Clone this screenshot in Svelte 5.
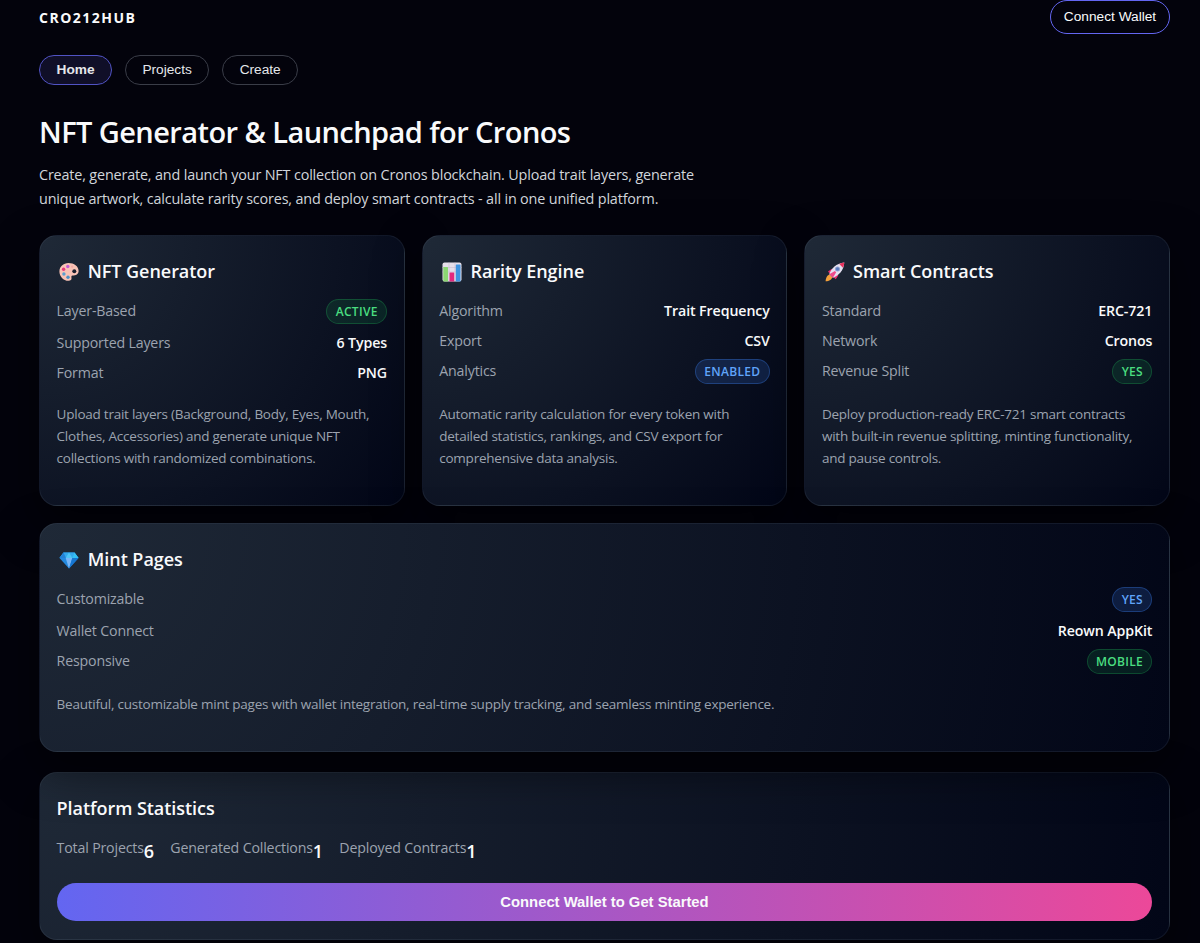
<script lang="ts">
    type Tone = "green" | "blue";

    interface Row {
        label: string;
        value: string;
        tone?: Tone;
    }

    interface Feature {
        icon: "palette" | "chart" | "rocket" | "gem";
        title: string;
        rows: Row[];
        text: string;
        wide?: boolean;
    }

    const tabs = ["Home", "Projects", "Create"];
    let active = $state("Home");

    const features: Feature[] = [
        {
            icon: "palette",
            title: "NFT Generator",
            rows: [
                { label: "Layer-Based", value: "Active", tone: "green" },
                { label: "Supported Layers", value: "6 Types" },
                { label: "Format", value: "PNG" },
            ],
            text: "Upload trait layers (Background, Body, Eyes, Mouth, Clothes, Accessories) and generate unique NFT collections with randomized combinations.",
        },
        {
            icon: "chart",
            title: "Rarity Engine",
            rows: [
                { label: "Algorithm", value: "Trait Frequency" },
                { label: "Export", value: "CSV" },
                { label: "Analytics", value: "Enabled", tone: "blue" },
            ],
            text: "Automatic rarity calculation for every token with detailed statistics, rankings, and CSV export for comprehensive data analysis.",
        },
        {
            icon: "rocket",
            title: "Smart Contracts",
            rows: [
                { label: "Standard", value: "ERC-721" },
                { label: "Network", value: "Cronos" },
                { label: "Revenue Split", value: "Yes", tone: "green" },
            ],
            text: "Deploy production-ready ERC-721 smart contracts with built-in revenue splitting, minting functionality, and pause controls.",
        },
        {
            icon: "gem",
            title: "Mint Pages",
            rows: [
                { label: "Customizable", value: "Yes", tone: "blue" },
                { label: "Wallet Connect", value: "Reown AppKit" },
                { label: "Responsive", value: "Mobile", tone: "green" },
            ],
            text: "Beautiful, customizable mint pages with wallet integration, real-time supply tracking, and seamless minting experience.",
            wide: true,
        },
    ];

    const stats = [
        { label: "Total Projects", value: 6 },
        { label: "Generated Collections", value: 1 },
        { label: "Deployed Contracts", value: 1 },
    ];
</script>

{#snippet icon(name: Feature["icon"])}
    <svg class="icon" viewBox="0 0 20 20" aria-hidden="true">
        {#if name === "palette"}
            <path
                d="M9.5 1C4.3 1 .4 4.7.4 9.4c0 5 4 9.2 9 9.4 2 .1 3.4-1 3.1-2.8-.2-1.6-.3-2.5 1.1-2.6 3.400-.1 6-1.300 6-4.500C19.600 4.200 15 1 9.500 1z"
                fill="#f9c3b6"
            />
            <circle cx="15.3" cy="9.3" r="2" fill="#1c1f2d" />
            <circle cx="8.8" cy="4.5" r="1.7" fill="#c65bd3" />
            <circle cx="4.6" cy="7.3" r="1.7" fill="#e7397d" />
            <circle cx="4.9" cy="12" r="1.7" fill="#5c9fd0" />
            <circle cx="9" cy="15.2" r="1.7" fill="#4c91c4" />
            <circle cx="13.2" cy="4.7" r="1.1" fill="#f4a9a4" />
        {:else if name === "chart"}
            <rect x=".5" y=".5" width="19" height="19" rx="2" fill="#e6dfea" />
            <path d="M.5 5.5h19M.5 10h19M7 .5v19M13 .5v19" stroke="#c9bdd2" stroke-width=".6" />
            <rect x="1.3" y="5" width="4.7" height="14.5" rx=".6" fill="#8bd672" />
            <rect x="7.5" y="10.5" width="4.7" height="9" rx=".6" fill="#e3297e" />
            <rect x="13.8" y="2.5" width="4.7" height="17" rx=".6" fill="#3f94e0" />
        {:else if name === "rocket"}
            <path d="M4.6 12.5c-2 .3-3.8 3-4 6.7 3.7-.1 6.3-1.7 6.600-4z" fill="#f5a13a" />
            <path d="M3 9.5 6.5 7l2.6 1-3.5 4.5zM10.8 17.2l2.4-3.6-.8-2.7-4.7 3.8z" fill="#e72f70" />
            <path d="M4.3 12.3C6.3 6.5 11 1.5 19.3.6 18.8 8.5 13.8 13.7 7.9 15.8z" fill="#e5e1f1" />
            <path d="M14.3 2.1c1.5-.8 3.2-1.3 5-1.5-.1 2-.6 3.7-1.3 5.200z" fill="#ea315c" />
            <path d="m4.3 12.3 3.6 3.5 3.3-5.6-1.3-1.3z" fill="#f04b8a" />
            <circle cx="12.5" cy="7" r="2.5" fill="#8d9fcf" />
            <circle cx="12.5" cy="7" r="1.5" fill="#5579bf" />
        {:else}
            <path d="M4.5 2.5h11L19.5 8 10 18.5.5 8z" fill="#2489df" />
            <path d="M4.5 2.5h11L19.5 8H.5z" fill="#33a8ec" />
            <path d="M4.5 2.5 7 8H.5z" fill="#2381d6" />
            <path d="M10 2.5 13.3 8H6.7z" fill="#4fc5f4" />
            <path d="m15.5 2.5 4 5.5h-6.2z" fill="#35c0f3" />
            <path d="M6.7 8h6.6L10 18.5z" fill="#78b5f7" />
            <path d="M13.3 8h6.2L10 18.5z" fill="#1676d2" />
        {/if}
    </svg>
{/snippet}

<div class="page">
    <header>
        <div class="brand">CRO212HUB</div>
        <button class="wallet">Connect Wallet</button>
    </header>

    <nav>
        {#each tabs as tab}
            <button class="tab" class:active={active === tab} onclick={() => (active = tab)}>{tab}</button>
        {/each}
    </nav>

    <section class="hero">
        <h1>NFT Generator &amp; Launchpad for Cronos</h1>
        <p>
            Create, generate, and launch your NFT collection on Cronos blockchain. Upload trait layers, generate
            unique artwork, calculate rarity scores, and deploy smart contracts - all in one unified platform.
        </p>
    </section>

    <section class="grid">
        {#each features as feature}
            <article class="card" class:wide={feature.wide}>
                <h2>{@render icon(feature.icon)}{feature.title}</h2>
                <div class="rows">
                    {#each feature.rows as row}
                        <div class="row">
                            <span class="label">{row.label}</span>
                            {#if row.tone}
                                <span class="pill {row.tone}">{row.value}</span>
                            {:else}
                                <span class="value">{row.value}</span>
                            {/if}
                        </div>
                    {/each}
                </div>
                <p>{feature.text}</p>
            </article>
        {/each}
    </section>

    <section class="card stats">
        <h2>Platform Statistics</h2>
        <div class="stat-list">
            {#each stats as stat}
                <div class="stat">
                    <span class="label">{stat.label}</span>
                    <span class="number">{stat.value}</span>
                </div>
            {/each}
        </div>
        <button class="cta">Connect Wallet to Get Started</button>
    </section>
</div>

<style>
    :global(body) {
        background: #03030c;
        overflow: hidden;
    }

    .page {
        box-sizing: border-box;
        height: 943px;
        padding: 0 30px 0 39px;
        overflow: hidden;
        font-family: "Open Sans", "Noto Sans", sans-serif;
        color: #f9fafb;
    }

    header {
        display: flex;
        justify-content: space-between;
        height: 34px;
    }

    .brand {
        font-size: 14px;
        font-weight: 700;
        line-height: 35px;
        letter-spacing: 1.5px;
    }

    button {
        box-sizing: border-box;
        padding: 0;
        font-family: "Liberation Sans", Arial, sans-serif;
        color: #f9fafb;
        background: transparent;
        border-radius: 999px;
        cursor: pointer;
    }

    .wallet {
        width: 120px;
        height: 34px;
        padding-bottom: 2px;
        font-size: 13.7px;
        border: 1px solid #6366f1;
    }

    nav {
        display: flex;
        gap: 12.6px;
        margin-top: 21px;
    }

    .tab {
        height: 30px;
        padding: 0 16.6px 1px;
        font-size: 13.7px;
        color: #e5e7eb;
        border: 1px solid #3a3d48;
    }

    .tab.active {
        font-weight: 700;
        background: #100f28;
        border-color: #5153c4;
    }

    .hero {
        margin-top: 27px;
    }

    h1 {
        margin: 0;
        font-size: 29px;
        font-weight: 600;
        line-height: 40px;
        letter-spacing: -0.58px;
    }

    .hero p {
        width: 680px;
        margin: 11px 0 0;
        font-size: 14.4px;
        line-height: 24px;
        letter-spacing: -0.17px;
        color: #d1d5db;
    }

    .grid {
        display: grid;
        grid-template-columns: repeat(3, 1fr);
        gap: 17px;
        margin-top: 24px;
    }

    .card {
        box-sizing: border-box;
        padding: 17px 16.6px 36px;
        background: radial-gradient(circle at top left, #1f2937, #020617);
        border: 1px solid rgba(148, 163, 184, 0.1);
        border-radius: 18px;
        box-shadow: 0 18px 45px rgba(0, 0, 0, 0.5);
    }

    .wide {
        grid-column: 1 / -1;
    }

    h2 {
        display: flex;
        align-items: center;
        margin: 0;
        font-size: 18px;
        font-weight: 600;
        line-height: 36px;
        letter-spacing: -0.05px;
    }

    .icon {
        width: 20px;
        height: 20px;
        margin: 1px 8.6px 0 2.6px;
    }

    .rows {
        display: flex;
        flex-direction: column;
        gap: 6px;
        margin-top: 10px;
    }

    .row {
        display: flex;
        justify-content: space-between;
        align-items: flex-start;
    }

    .label {
        font-size: 14.2px;
        line-height: 24px;
        letter-spacing: -0.17px;
        color: #9ca3af;
    }

    .value {
        font-size: 14.2px;
        font-weight: 600;
        line-height: 24px;
        letter-spacing: -0.1px;
    }

    .pill {
        box-sizing: border-box;
        height: 25px;
        margin-bottom: 1px;
        padding: 0 8.4px;
        font-size: 12px;
        font-weight: 600;
        line-height: 24px;
        letter-spacing: 0.3px;
        text-transform: uppercase;
        border: 1px solid;
        border-radius: 999px;
    }

    .green {
        color: #4ade80;
        background: rgba(34, 197, 94, 0.13);
        border-color: rgba(34, 197, 94, 0.26);
    }

    .blue {
        color: #60a5fa;
        background: rgba(59, 130, 246, 0.18);
        border-color: rgba(59, 130, 246, 0.32);
    }

    .card p {
        margin: 18px 0 0;
        font-size: 13.5px;
        line-height: 22px;
        letter-spacing: -0.24px;
        color: #9ca3af;
    }

    .stats {
        height: 168px;
        margin-top: 20px;
        padding-bottom: 18px;
    }

    .stat-list {
        display: flex;
        gap: 17px;
        height: 30px;
        margin-top: 10px;
    }

    .stat {
        display: flex;
    }

    .number {
        font-size: 18px;
        font-weight: 600;
        line-height: 31px;
        letter-spacing: -0.8px;
    }

    .cta {
        width: 100%;
        height: 38px;
        margin-top: 17px;
        font-size: 14.8px;
        font-weight: 700;
        background: linear-gradient(90deg, #6366f1, #ec4899);
        border: 0;
    }
</style>
